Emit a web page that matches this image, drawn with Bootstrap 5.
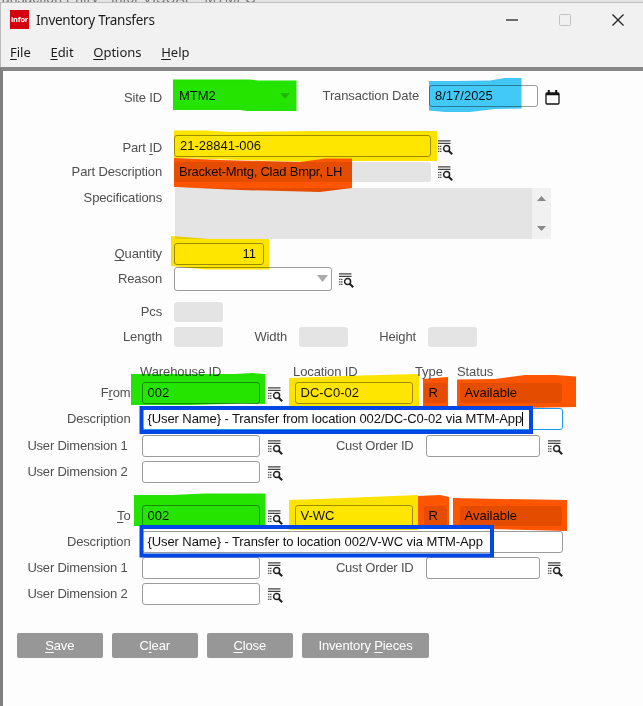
<!DOCTYPE html>
<html lang="en">
<head>
<meta charset="utf-8">
<meta name="viewport" content="width=device-width, initial-scale=1">
<title>Inventory Transfers</title>
<link href="https://cdn.jsdelivr.net/npm/bootstrap@5.3.0/dist/css/bootstrap.min.css" rel="stylesheet">
<style>
body{width:643px;height:706px;overflow:hidden;background:#fdfdfd;font:13px/16px "Liberation Sans",Arial,sans-serif;color:#505050}
u{text-underline-offset:2px}
.behind{height:3px;background:#e4e4e4;border-bottom:1px solid #bdbdbd;font-size:14px;line-height:14px;color:#777;white-space:nowrap}
.behind span{margin-top:-9px;margin-left:2px}
.chrome{background:#f1f1f1;border-left:1px solid #bbb;font-family:"Noto Sans","Open Sans",sans-serif;color:#1c1c1c}
.titlebar{height:33px;padding-left:9px;font-size:13.5px;letter-spacing:-.26px}
.logo{width:19px;height:19px;background:#d5000e;color:#fff;font:bold 7.5px/18px "Open Sans",sans-serif;letter-spacing:-.2px}
.title{margin-left:7px}
.controls{margin-right:19px;gap:41px}
.menus{height:31px;padding-left:9px;font-size:13px}
.menus span{margin-right:19.6px}
.pane{height:639px;border-top:4px solid #868686;border-left:3px solid #808080}
.line{height:24px}
.lbl{width:159px;margin-right:12px;text-align:right;white-space:nowrap;flex:none;letter-spacing:-.13px}
.transfer .lbl{width:127.5px;margin-right:11px}
.transfer .dim{padding-right:3px;letter-spacing:-.2px}
.transfer .cust{width:131px;margin-right:12px;letter-spacing:-.2px}
#dateLabel{width:123px;margin-right:10px}
.lbl.size{width:64px}
.lbl.size.tall{width:68px}
.box{height:22.5px;border:1px solid #9c9c9c;border-radius:3px;background:#fff;color:#111;padding:0 5px;line-height:20px;white-space:nowrap;flex:none}
.off{height:20px;border:0;background:#e4e4e4;padding-left:5px}
.partname{letter-spacing:-.22px}
.ico{width:15px;height:15px;flex:none;margin:2px 0 0 7px}
.transfer .ico{margin-left:8px}
.w-part{width:257px}.w-qty{width:90px;padding-right:7px}.w-reason{width:158px}.w-small{width:49px}
.w-wh{width:118px}.w-type{width:23px}.w-status{width:102px}.w-cust{width:114px}.w-desc{width:421.5px}.w-date{width:109px}
.w-site{width:122px;background:#fff}
.active{border-color:#1a9bef}
.msg{letter-spacing:-.09px}
.spec{height:51px;margin-top:4px}
.specbox{width:357px;background:#e4e4e4;margin-left:1px}
.scroll{width:19px;background:#f1f1f1}
.g1{margin-top:1px}.g2{margin-top:2px}.g3{margin-top:3px}.g9{margin-top:9px}.g13{margin-top:13px}.g20{margin-top:20px}.g26{margin-top:26px}
.heads{height:19px;padding-left:137px;letter-spacing:-.1px}
.h-wh{width:153px}.h-loc{width:122px}.h-type{width:42px}
.loc{margin-left:12px}.type{margin-left:11px}.status{margin-left:13px}
.actions{margin-top:27px;padding-left:14px;gap:9.5px}
.act{width:85.5px;height:25px;border:0;border-radius:2px;background:#979797;color:#fff;font-size:13px;line-height:24px;padding:0;letter-spacing:-.12px}
.act.wide{width:127px}
.ink{mix-blend-mode:multiply;pointer-events:none}
.caret{width:1px;height:14px;background:#000}
</style>
</head>
<body class="position-relative">
<svg class="d-none">
<symbol id="find" viewBox="0 0 15 15"><path d="M0 .8h12.500M0 3.300h12.500" stroke="#444" stroke-width="1.3"/><path d="M0 6.300h4M0 8.800h3.500M0 11.300h4" stroke="#555" stroke-width="1.2" stroke-dasharray="1.5 .5"/><circle cx="8.600" cy="8.600" r="3" fill="none" stroke="#222" stroke-width="1.5"/><path d="M10.700 10.700l3.500 3.500" stroke="#222" stroke-width="2.100"/></symbol>
</svg>
<div class="behind overflow-hidden"><span class="d-block">ansaction Entry - Infor VISUAL - MTMFG</span></div>
<header class="chrome">
<div class="titlebar d-flex align-items-center">
<div class="logo text-center">infor</div><div class="title">Inventory Transfers</div>
<div class="controls d-flex align-items-center ms-auto">
<svg width="12" height="12"><path d="M0 6h12" stroke="#333" stroke-width="1.4"/></svg>
<svg width="12" height="12"><rect x=".5" y=".5" width="11" height="11" rx="1" fill="none" stroke="#c3c3c3"/></svg>
<svg width="12" height="12"><path d="M.5.5l11 11M11.500.5l-11 11" stroke="#222" stroke-width="1.3"/></svg>
</div></div>
<nav class="menus d-flex align-items-center"><span><u>F</u>ile</span><span><u>E</u>dit</span><span><u>O</u>ptions</span><span><u>H</u>elp</span></nav>
</header>
<main class="pane">
<div class="line d-flex align-items-center g13"><div class="lbl pt-1">Site ID</div><div class="box off w-site d-flex align-items-center justify-content-between">MTM2<svg width="12" height="8"><path d="M1 1h10l-5 6z" fill="#ccc"/></svg></div>
<div class="lbl" id="dateLabel">Transaction Date</div><div class="box w-date">8/17/2025</div><svg class="ico cal" viewBox="0 0 15 15"><rect x="1" y="3" width="13" height="11" rx="1" fill="none" stroke="#111" stroke-width="1.300"/><path d="M1 4.200h13M3.800 0v4M11.200 0v4" stroke="#111" stroke-width="2"/></svg></div>
<div class="line d-flex align-items-center g26"><div class="lbl pt-1">Part <u>I</u>D</div><div class="box w-part">21-28841-006</div><svg class="ico"><use href="#find"/></svg></div>
<div class="line d-flex align-items-center g2"><div class="lbl">Part Description</div><div class="box off w-part partname">Bracket-Mntg, Clad Bmpr, LH</div><svg class="ico"><use href="#find"/></svg></div>
<div class="spec d-flex"><div class="lbl g2">Specifications</div><div class="specbox"></div><div class="scroll d-flex flex-column justify-content-between align-items-center py-2"><svg width="9" height="5"><path d="M0 5h9l-4.500-5z" fill="#888"/></svg><svg width="9" height="5"><path d="M0 0h9l-4.500 5z" fill="#888"/></svg></div></div>
<div class="line d-flex align-items-center g3"><div class="lbl"><u>Q</u>uantity</div><div class="box w-qty text-end">11</div></div>
<div class="line d-flex align-items-center g1"><div class="lbl">Reason</div><div class="box w-reason h-100 d-flex align-items-center justify-content-end px-0"><svg width="16" height="8"><path d="M2 0h11l-5.500 7z" fill="#aaa"/></svg></div><svg class="ico"><use href="#find"/></svg></div>
<div class="line d-flex align-items-center g9"><div class="lbl">Pcs</div><div class="box off w-small"></div></div>
<div class="line d-flex align-items-center g1"><div class="lbl">Length</div><div class="box off w-small"></div><div class="lbl size">Width</div><div class="box off w-small"></div><div class="lbl size tall">Height</div><div class="box off w-small"></div></div>
<section class="transfer g13">
<div class="heads d-flex align-items-center"><span class="h-wh">Warehouse ID</span><span class="h-loc">Location ID</span><span class="h-type">Type</span><span>Status</span></div>
<div class="line d-flex align-items-center"><div class="lbl">F<u>r</u>om</div><div class="box w-wh">002</div><svg class="ico"><use href="#find"/></svg><div class="box w-wh loc">DC-C0-02</div><div class="box off w-type type">R</div><div class="box off w-status status">Available</div></div>
<div class="line d-flex align-items-center g2"><div class="lbl">Description</div><div class="box active w-desc d-flex align-items-center"><span class="msg">{User Name} - Transfer from location 002/DC-C0-02 via MTM-App</span><span class="caret"></span></div></div>
<div class="line d-flex align-items-center g3"><div class="lbl dim">User Dimension 1</div><div class="box w-wh"></div><svg class="ico"><use href="#find"/></svg><div class="lbl cust">Cust Order ID</div><div class="box w-cust"></div><svg class="ico"><use href="#find"/></svg></div>
<div class="line d-flex align-items-center g2"><div class="lbl dim">User Dimension 2</div><div class="box w-wh"></div><svg class="ico"><use href="#find"/></svg></div>
</section>
<section class="transfer g20">
<div class="line d-flex align-items-center"><div class="lbl"><u>T</u>o</div><div class="box w-wh">002</div><svg class="ico"><use href="#find"/></svg><div class="box w-wh loc">V-WC</div><div class="box off w-type type">R</div><div class="box off w-status status">Available</div></div>
<div class="line d-flex align-items-center g2"><div class="lbl">Description</div><div class="box w-desc"><span class="msg">{User Name} - Transfer to location 002/V-WC via MTM-App</span></div></div>
<div class="line d-flex align-items-center g2"><div class="lbl dim">User Dimension 1</div><div class="box w-wh"></div><svg class="ico"><use href="#find"/></svg><div class="lbl cust">Cust Order ID</div><div class="box w-cust"></div><svg class="ico"><use href="#find"/></svg></div>
<div class="line d-flex align-items-center g2"><div class="lbl dim">User Dimension 2</div><div class="box w-wh"></div><svg class="ico"><use href="#find"/></svg></div>
</section>
<div class="actions d-flex"><button class="btn act"><u>S</u>ave</button><button class="btn act">C<u>l</u>ear</button><button class="btn act"><u>C</u>lose</button><button class="btn act wide">Inventory <u>P</u>ieces</button></div>
</main>
<!-- Marker strokes over the fields -->
<svg class="ink position-absolute top-0 start-0" width="643" height="706">
<g fill="#25e500"><path d="M173 79.500H250L258 80.500H296.500V111H247L240 110H173z"/><path d="M131 374H235L252 373L265 374V404L240 403.500L190 405H131z"/><path d="M134 495H172L205 493.500H265.500V526H134z"/></g>
<g fill="#ffe600"><path d="M174 130.500H206L230 132L312 131H437V161H350L310 162L174 158z"/><path d="M171 236L210 239H269V269.500H205L171 266z"/><path d="M289 378L360 375.500L419 374V406H289z"/><path d="M289 500L345 498L418 495V530H289z"/></g>
<g fill="#ff5500"><path d="M174 158L220 160L300 162L325 158.500H352V188L320 192L240 190L174 187z"/><path d="M423 379L448 377V409H423z"/><path d="M457 379.500L495 379L525 375H555L576 376.500V407L457 409z"/><path d="M418 496L440 495L449 497V526H418z"/><path d="M453 498L500 499L567 500V531L453 528z"/></g>
<path fill="#42c9f7" d="M429 81L455 81L490 80.500L505 78H521.500V108.500L495 109L470 112H445L429 110.500z"/>
</svg>
<svg class="position-absolute top-0 start-0 pe-none" width="643" height="706"><g fill="none" stroke="#0048e6" stroke-width="4"><path d="M141.500 408H531V432H141.500z"/><path d="M141.500 527H492V555.500H141.500z"/></g></svg>
<script src="https://cdn.jsdelivr.net/npm/bootstrap@5.3.0/dist/js/bootstrap.bundle.min.js"></script>
</body>
</html>
